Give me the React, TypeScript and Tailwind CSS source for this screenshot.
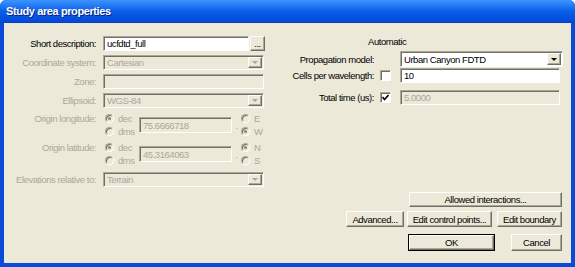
import type { ReactNode } from 'react';

const sunken = 'border border-[#aca899] border-b-white border-r-white shadow-[inset_1px_1px_0_#716f64]';
const raised = 'border border-white border-b-[#716f64] border-r-[#716f64] shadow-[inset_-1px_-1px_0_#aca899]';

function TextBox({ value, disabled, className = '' }: { value?: string; disabled?: boolean; className?: string }) {
  return (
    <div
      className={`${sunken} flex items-center pl-[3px] ${
        disabled ? 'bg-[#ece9d8] text-[#aca899]' : 'bg-white text-black'
      } ${className}`}
    >
      {value}
    </div>
  );
}

function Combo({ value, disabled, className = '' }: { value: string; disabled?: boolean; className?: string }) {
  return (
    <div
      className={`${sunken} flex items-stretch p-[1px] ${
        disabled ? 'bg-[#ece9d8] text-[#aca899]' : 'bg-white text-black'
      } ${className}`}
    >
      <div className="flex-1 flex items-center pl-[2px]">{value}</div>
      <div className={`${raised} w-[14px] flex items-center justify-center bg-[#ece9d8]`}>
        <span
          className={`border-x-[3px] border-t-[3px] border-x-transparent ${
            disabled ? 'border-t-[#aca899]' : 'border-t-black'
          }`}
        />
      </div>
    </div>
  );
}

function Radio({ checked }: { checked?: boolean }) {
  return (
    <span className="w-[9px] h-[9px] rounded-full border border-[#aca899] border-b-white border-r-white bg-[#ece9d8] flex items-center justify-center shadow-[inset_1px_1px_0_#716f64]">
      {checked && <span className="w-[3px] h-[3px] rounded-full bg-[#8a877a]" />}
    </span>
  );
}

function Check({ checked }: { checked?: boolean }) {
  return (
    <span className={`${sunken} w-[11px] h-[11px] bg-white flex items-center justify-center`}>
      {checked && (
        <svg width="7" height="7" viewBox="0 0 7 7">
          <path d="M0.5 3 L2.5 5.5 L6.5 1" stroke="black" strokeWidth="1.6" fill="none" />
        </svg>
      )}
    </span>
  );
}

function Btn({ children, className = '', def }: { children: ReactNode; className?: string; def?: boolean }) {
  if (def) {
    return (
      <div className={`border border-black ${className}`}>
        <div className={`${raised} h-full flex items-center justify-center bg-[#ece9d8]`}>{children}</div>
      </div>
    );
  }
  return <div className={`${raised} flex items-center justify-center bg-[#ece9d8] ${className}`}>{children}</div>;
}

function Label({ children, disabled }: { children: ReactNode; disabled?: boolean }) {
  return (
    <div className={`w-[92px] pr-[0px] text-right whitespace-nowrap ${disabled ? 'text-[#aca899]' : 'text-black'}`}>
      {children}
    </div>
  );
}

function Coord({ label, value, ns }: { label: string; value: string; ns: [string, string, boolean] }) {
  return (
    <div className="flex items-start h-[26px] text-[#aca899]">
      <div className="w-[92px] h-[13px] flex items-center justify-end whitespace-nowrap">{label}</div>
      <div className="w-[36px] ml-[7px] flex flex-col pl-[2px]">
        <div className="h-[13px] flex items-center gap-[4px]">
          <Radio checked />
          <span>dec</span>
        </div>
        <div className="h-[13px] flex items-center gap-[4px]">
          <Radio />
          <span>dms</span>
        </div>
      </div>
      <TextBox value={value} disabled className="w-[93px] h-[16px] mt-[5px]" />
      <div className="w-[9px] h-[26px] flex items-center justify-center">.</div>
      <div className="flex flex-col">
        <div className="h-[13px] flex items-center gap-[4px]">
          <Radio checked={!ns[2]} />
          <span>{ns[0]}</span>
        </div>
        <div className="h-[13px] flex items-center gap-[4px]">
          <Radio checked={ns[2]} />
          <span>{ns[1]}</span>
        </div>
      </div>
    </div>
  );
}

export default function App() {
  return (
    <div className="w-[575px] h-[267px] flex flex-col bg-[#0a4ad8] rounded-t-[6px] overflow-hidden font-['Liberation_Sans',Arial,sans-serif] text-[9.5px] tracking-[-0.45px] leading-[11px]">
      {/* title bar */}
      <div className="h-[23px] shrink-0 flex items-center pl-[6px] bg-gradient-to-b from-[#3d95ff] via-[#0a5fe9] to-[#0448d6] border-b border-[#0a3cc4]">
        <span className="text-white font-bold text-[11px] tracking-[-0.4px] [text-shadow:1px_1px_0_#0a1f80]">
          Study area properties
        </span>
      </div>

      {/* body */}
      <div className="flex-1 flex mx-[4px] mb-[4px] bg-[#ece9d8]">
        {/* left column */}
        <div className="w-[266px] flex flex-col pt-[13px]">
          <div className="flex items-center h-[15px]">
            <Label>Short description:</Label>
            <TextBox value="ucfdtd_full" className="w-[146px] h-[15px] ml-[7px]" />
            <Btn className="w-[15px] h-[15px] ml-[1px] text-black">...</Btn>
          </div>
          <div className="flex items-center h-[15px] mt-[4px]">
            <Label disabled>Coordinate system:</Label>
            <Combo value="Cartesian" disabled className="w-[161px] h-[15px] ml-[7px]" />
          </div>
          <div className="flex items-center h-[15px] mt-[4px]">
            <Label disabled>Zone:</Label>
            <TextBox disabled className="w-[161px] h-[15px] ml-[7px]" />
          </div>
          <div className="flex items-center h-[15px] mt-[4px]">
            <Label disabled>Ellipsoid:</Label>
            <Combo value="WGS-84" disabled className="w-[161px] h-[15px] ml-[7px]" />
          </div>
          <div className="mt-[4px]">
            <Coord label="Origin longitude:" value="75.6666718" ns={['E', 'W', true]} />
          </div>
          <div className="mt-[3px]">
            <Coord label="Origin latitude:" value="45.3164063" ns={['N', 'S', false]} />
          </div>
          <div className="flex items-center h-[15px] mt-[5px]">
            <Label disabled>Elevations relative to:</Label>
            <Combo value="Terrain" disabled className="w-[161px] h-[15px] ml-[7px]" />
          </div>
        </div>

        {/* right column */}
        <div className="flex-1 flex flex-col pt-[13px] text-black">
          <div className="h-[12px] pl-[98px]">Automatic</div>
          <div className="flex items-center h-[16px] mt-[3px]">
            <div className="w-[104px] text-right whitespace-nowrap">Propagation model:</div>
            <div className="w-[26px]" />
            <Combo value="Urban Canyon FDTD" className="w-[163px] h-[16px]" />
          </div>
          <div className="flex items-center h-[15px] mt-[1px]">
            <div className="w-[104px] text-right whitespace-nowrap">Cells per wavelength:</div>
            <div className="w-[26px] pl-[6px] flex items-center">
              <Check />
            </div>
            <TextBox value="10" className="w-[160px] h-[15px]" />
          </div>
          <div className="flex items-center h-[15px] mt-[7px]">
            <div className="w-[104px] text-right whitespace-nowrap">Total time (us):</div>
            <div className="w-[26px] pl-[6px] flex items-center">
              <Check checked />
            </div>
            <TextBox value="5.0000" disabled className="w-[160px] h-[15px]" />
          </div>

          <div className="mt-auto pb-[12px] pr-[9px] flex flex-col items-end">
            <Btn className="w-[153px] h-[15px]">Allowed interactions...</Btn>
            <div className="flex mt-[4px] h-[16px]">
              <Btn className="w-[58px] h-full">Advanced...</Btn>
              <Btn className="w-[85px] h-full ml-[3px]">Edit control points...</Btn>
              <Btn className="w-[65px] h-full ml-[5px]">Edit boundary</Btn>
            </div>
            <div className="flex mt-[7px] h-[17px]">
              <Btn def className="w-[87px] h-full">
                OK
              </Btn>
              <Btn className="w-[51px] h-full ml-[16px]">Cancel</Btn>
            </div>
          </div>
        </div>
      </div>
    </div>
  );
}
